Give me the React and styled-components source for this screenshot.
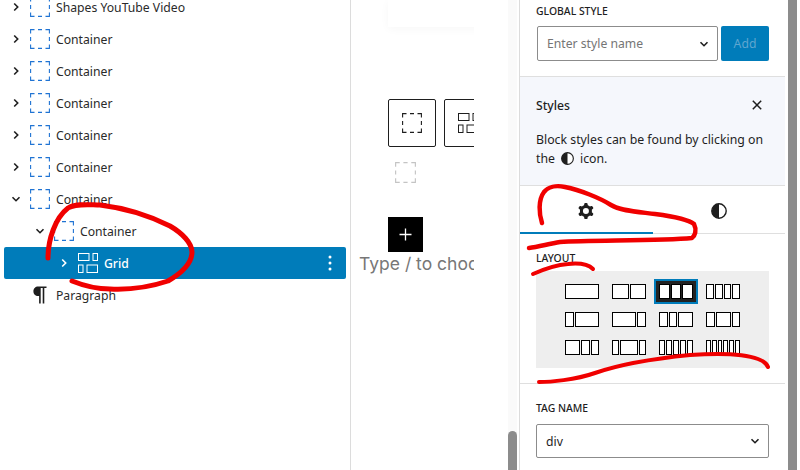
import React from 'react'
import styled, { createGlobalStyle } from 'styled-components'

const Global = createGlobalStyle`
  html, body { margin: 0; padding: 0; background: #fff; }
  body { font-family: "Noto Sans", "Open Sans", Arial, sans-serif; color: #1e1e1e; }
  * { box-sizing: border-box; }
`

const Page = styled.div`
  position: relative;
  display: flex;
  width: 800px;
  height: 470px;
  overflow: hidden;
  background: #fff;
`

/* left list view */
const ListPanel = styled.div`
  width: 351px;
  flex: none;
  border-right: 1px solid #dcdcdc;
  overflow: hidden;
`
const TreeList = styled.div`
  margin-top: -9px;
  display: flex;
  flex-direction: column;
`
const TreeRow = styled.div`
  display: flex;
  align-items: center;
  height: 32px;
  margin: 0 4px;
  padding-left: ${p => p.$depth * 24}px;
  border-radius: 2px;
  font-size: 12.2px;
  background: ${p => (p.$selected ? '#007cba' : 'transparent')};
  color: ${p => (p.$selected ? '#fff' : '#2a2a2a')};
  font-weight: ${p => (p.$selected ? 500 : 400)};
`
const ChevBox = styled.span`
  width: 24px;
  height: 24px;
  flex: none;
  display: flex;
  align-items: center;
  justify-content: center;
`
const IconBox = styled.span`
  width: 24px;
  height: 24px;
  flex: none;
  margin-right: 4px;
  display: flex;
  align-items: center;
  justify-content: center;
`
const RowLabel = styled.span`
  flex: 1;
`
const Kebab = styled.svg`
  width: 4px;
  height: 16px;
  margin-right: 14px;
`

/* canvas column */
const Canvas = styled.div`
  width: 169px;
  flex: none;
  display: flex;
  border-right: 1px solid #dcdcdc;
`
const CanvasClip = styled.div`
  width: 123px;
  flex: none;
  overflow: hidden;
  display: flex;
  flex-direction: column;
  align-items: flex-start;
`
const GhostCard = styled.div`
  width: 110px;
  height: 27px;
  flex: none;
  margin-left: 37px;
  background: #fff;
  box-shadow: 0 2px 10px rgba(0, 0, 0, 0.035);
`
const BlockChoices = styled.div`
  display: flex;
  gap: 8px;
  margin: 72px 0 0 37px;
`
const ChoiceButton = styled.div`
  width: 48px;
  height: 48px;
  flex: none;
  border: 1px solid #1e1e1e;
  border-radius: 2px;
  display: flex;
  align-items: center;
  justify-content: center;
`
const FaintIcon = styled.div`
  margin: 15px 0 0 44px;
  height: 21px;
  display: flex;
`
const PlusButton = styled.div`
  width: 35px;
  height: 35px;
  flex: none;
  margin: 34px 0 0 37px;
  background: #000;
  display: flex;
  align-items: center;
  justify-content: center;
`
const TypeHint = styled.div`
  margin: 0 0 0 8px;
  font-family: "Inter", "Lato", sans-serif;
  font-size: 17.5px;
  line-height: 24px;
  color: #777;
  white-space: nowrap;
`
const CanvasGutter = styled.div`
  flex: 1;
`
const CanvasTrack = styled.div`
  width: 9px;
  flex: none;
  margin-right: 2px;
  background: #fafafa;
  display: flex;
  flex-direction: column;
  justify-content: flex-end;
`
const Thumb = styled.div`
  height: 39px;
  background: #8c8c8c;
  border-radius: 5px 5px 0 0;
`

/* right sidebar */
const Sidebar = styled.div`
  width: 265px;
  flex: none;
  display: flex;
  flex-direction: column;
  font-size: 12.2px;
`
const Section = styled.div`
  padding: ${p => p.$pad};
  border-bottom: ${p => (p.$last ? 'none' : '1px solid #dfdfdf')};
  flex: none;
  height: ${p => p.$h}px;
`
const FieldLabel = styled.div`
  font-size: 10.4px;
  line-height: 14px;
  font-weight: 500;
  text-transform: uppercase;
  color: #1e1e1e;
`
const StyleRow = styled.div`
  display: flex;
  gap: 3px;
  margin: 8px 0 0 1px;
`
const TagRow = styled.div`
  display: flex;
  margin-top: 9px;
`
const SelectBox = styled.div`
  flex: 1;
  height: ${p => p.$h}px;
  border: 1px solid #8c8c8c;
  border-radius: 2px;
  padding: 0 8px 0 9px;
  display: flex;
  align-items: center;
  justify-content: space-between;
  color: ${p => (p.$placeholder ? '#757575' : '#1e1e1e')};
  font-size: 12.2px;
`
const AddButton = styled.div`
  width: 48px;
  height: 35px;
  flex: none;
  background: #007cba;
  border-radius: 2px;
  color: #5fa6d0;
  display: flex;
  align-items: center;
  justify-content: center;
  font-size: 12.2px;
`
const Notice = styled.div`
  height: 109px;
  flex: none;
  background: #f5f7fc;
  border-bottom: 1px solid #dfdfdf;
  padding: 19px 16px 0;
`
const NoticeHead = styled.div`
  display: flex;
  justify-content: space-between;
  align-items: center;
  height: 18px;
  padding-right: 7px;
  font-weight: 500;
  font-size: 12.2px;
`
const NoticeText = styled.div`
  margin-top: 16px;
  font-size: 12.3px;
`
const NoticeLine = styled.div`
  display: flex;
  align-items: center;
  height: 19px;
  gap: 6px;
`
const Tabs = styled.div`
  display: flex;
  height: 48px;
  flex: none;
  border-bottom: 1px solid #dfdfdf;
`
const Tab = styled.div`
  width: ${p => p.$w}px;
  display: flex;
  align-items: center;
  justify-content: center;
  height: 48px;
  flex: none;
  border-bottom: ${p => (p.$active ? '2px solid #007cba' : 'none')};
  padding: ${p => (p.$active ? '3px 1px 0 0' : '2px 0 0')};
`
const LayoutGrid = styled.div`
  margin-top: 6px;
  width: 233px;
  height: 97px;
  background: #eee;
  padding: 13px 0 0 29px;
  display: grid;
  grid-template-columns: repeat(4, 34px);
  grid-auto-rows: 15px;
  column-gap: 13px;
  row-gap: 13px;
`
const LayoutOption = styled.div`
  position: relative;
  display: flex;
  gap: 1px;
  height: 15px;
  ${p => p.$active && `
    &::before {
      content: '';
      position: absolute;
      inset: -5px -5px;
      background: #222;
      border: 2px solid #007cba;
    }
  `}
`
const LayoutCell = styled.div`
  position: relative;
  flex: ${p => p.$grow} 1 0;
  min-width: 0;
  background: #fff;
  border: 1px solid #000;
`

/* marker scribbles sit on top of the whole shot */
const Scribbles = styled.svg`
  position: absolute;
  left: 0;
  top: 0;
  width: 800px;
  height: 470px;
  pointer-events: none;
`
const PageScroll = styled.div`
  width: 9px;
  flex: none;
  margin-left: 3px;
  background: #8c8c8c;
`

const Chevron = ({ open, color = '#1e1e1e' }) => (
  <svg width="10" height="10" viewBox="0 0 10 10" fill="none" stroke={color} strokeWidth="1.6">
    <path d={open ? 'M1.5 3.2 5 6.7l3.5-3.5' : 'M3.2 1.5 6.7 5 3.2 8.5'} />
  </svg>
)

const DashedSquare = ({ color = '#1f73d3', size = 20 }) => (
  <svg width={size} height={size} viewBox="0 0 20 20" fill="none" stroke={color} strokeWidth="1.1">
    <path d="M.6 4.5V.6h3.9M8 .6h4M15.5.6h3.9v3.9M19.4 8v4M19.4 15.5v3.9h-3.9M12 19.4H8M4.5 19.4H.6v-3.9M.6 12V8" />
  </svg>
)

const GridGlyph = ({ color = '#fff' }) => (
  <svg width="20" height="20" viewBox="0 0 20 20" fill="none" stroke={color} strokeWidth="1">
    <rect x=".5" y=".5" width="10.5" height="7" />
    <rect x="15" y=".5" width="4.5" height="7" />
    <rect x=".5" y="12" width="4.5" height="7.5" />
    <rect x="9" y="12" width="10.5" height="7.5" />
  </svg>
)

const Pilcrow = () => (
  <svg width="14" height="18" viewBox="0 0 14 18" fill="#1e1e1e">
    <path d="M13.5.5H5.2C2.3.5.4 2.6.4 5.3s1.9 4.8 4.8 4.8h.9v7.4h1.6V2h2v15.5h1.6V2h2.2z" />
  </svg>
)

const HalfCircle = ({ size }) => (
  <svg width={size} height={size} viewBox="0 0 16 16">
    <circle cx="8" cy="8" r="7.2" fill="#fff" stroke="#1e1e1e" strokeWidth="1.4" />
    <path d="M8 .8a7.2 7.2 0 0 0 0 14.4z" fill="#1e1e1e" />
  </svg>
)

const treeRows = [
  { label: 'Shapes YouTube Video', depth: 0 },
  { label: 'Container', depth: 0 },
  { label: 'Container', depth: 0 },
  { label: 'Container', depth: 0 },
  { label: 'Container', depth: 0 },
  { label: 'Container', depth: 0 },
  { label: 'Container', depth: 0, open: true },
  { label: 'Container', depth: 1, open: true },
]

const layouts = [
  [1], [1, 1], [1, 1, 1], [1, 1, 1, 1],
  [1, 3], [3, 1], [1, 1, 2], [1, 2, 1],
  [2, 1, 1], [1, 3, 1], [1, 1, 1, 1, 1], [1, 1, 1, 1, 1, 1],
]

export default function App() {
  return (
    <Page>
      <Global />
      <ListPanel>
        <TreeList>
          {treeRows.map((row, i) => (
            <TreeRow key={i} $depth={row.depth}>
              <ChevBox><Chevron open={row.open} /></ChevBox>
              <IconBox><DashedSquare /></IconBox>
              <RowLabel>{row.label}</RowLabel>
            </TreeRow>
          ))}
          <TreeRow $depth={2} $selected>
            <ChevBox><Chevron color="#fff" /></ChevBox>
            <IconBox><GridGlyph /></IconBox>
            <RowLabel>Grid</RowLabel>
            <Kebab viewBox="0 0 4 16" fill="#fff">
              <circle cx="2" cy="2" r="1.5" />
              <circle cx="2" cy="8" r="1.5" />
              <circle cx="2" cy="14" r="1.5" />
            </Kebab>
          </TreeRow>
          <TreeRow $depth={0}>
            <ChevBox />
            <IconBox><Pilcrow /></IconBox>
            <RowLabel>Paragraph</RowLabel>
          </TreeRow>
        </TreeList>
      </ListPanel>

      <Canvas>
        <CanvasClip>
          <GhostCard />
          <BlockChoices>
            <ChoiceButton><DashedSquare color="#1e1e1e" /></ChoiceButton>
            <ChoiceButton><GridGlyph color="#1e1e1e" /></ChoiceButton>
          </BlockChoices>
          <FaintIcon><DashedSquare color="#c4c4c4" size={21} /></FaintIcon>
          <PlusButton>
            <svg width="13" height="13" viewBox="0 0 13 13" stroke="#fff" strokeWidth="1.3">
              <path d="M6.5.5v12M.5 6.5h12" />
            </svg>
          </PlusButton>
          <TypeHint>Type / to choo</TypeHint>
        </CanvasClip>
        <CanvasGutter />
        <CanvasTrack><Thumb /></CanvasTrack>
      </Canvas>

      <Sidebar>
        <Section $h={77} $pad="4px 16px 0">
          <FieldLabel>Global Style</FieldLabel>
          <StyleRow>
            <SelectBox $h={35} $placeholder>
              Enter style name
              <Chevron open color="#1e1e1e" />
            </SelectBox>
            <AddButton>Add</AddButton>
          </StyleRow>
        </Section>
        <Notice>
          <NoticeHead>
            Styles
            <svg width="10" height="10" viewBox="0 0 10 10" stroke="#1e1e1e" strokeWidth="1.5">
              <path d="M.8.8l8.4 8.4M9.2.8.8 9.2" />
            </svg>
          </NoticeHead>
          <NoticeText>
            <NoticeLine>Block styles can be found by clicking on</NoticeLine>
            <NoticeLine>
              <span>the</span>
              <HalfCircle size={13} />
              <span>icon.</span>
            </NoticeLine>
          </NoticeText>
        </Notice>
        <Tabs>
          <Tab $w={133} $active>
            <svg width="24" height="24" viewBox="0 0 24 24" fill="#1e1e1e">
              <path fillRule="evenodd" clipRule="evenodd" d="M10.289 4.836A1 1 0 0111.275 4h1.306a1 1 0 01.987.836l.244 1.466c.787.26 1.503.679 2.108 1.218l1.393-.522a1 1 0 011.216.437l.653 1.13a1 1 0 01-.23 1.273l-1.148.944a6.025 6.025 0 010 2.435l1.149.946a1 1 0 01.23 1.272l-.653 1.13a1 1 0 01-1.216.437l-1.394-.522c-.605.54-1.32.958-2.108 1.218l-.244 1.466a1 1 0 01-.987.836h-1.306a1 1 0 01-.986-.836l-.244-1.466a5.995 5.995 0 01-2.108-1.218l-1.394.522a1 1 0 01-1.217-.436l-.653-1.131a1 1 0 01.23-1.272l1.149-.946a6.026 6.026 0 010-2.435l-1.148-.944a1 1 0 01-.23-1.272l.653-1.131a1 1 0 011.217-.437l1.393.522a5.994 5.994 0 012.108-1.218l.244-1.466zM14.929 12a3 3 0 11-6 0 3 3 0 016 0z" />
            </svg>
          </Tab>
          <Tab $w={132}><HalfCircle size={16} /></Tab>
        </Tabs>
        <Section $h={150} $pad="17px 0 0 16px">
          <FieldLabel>Layout</FieldLabel>
          <LayoutGrid>
            {layouts.map((cells, i) => (
              <LayoutOption key={i} $active={i === 2}>
                {cells.map((grow, j) => <LayoutCell key={j} $grow={grow} />)}
              </LayoutOption>
            ))}
          </LayoutGrid>
        </Section>
        <Section $h={80} $pad="17px 16px 0" $last>
          <FieldLabel>Tag Name</FieldLabel>
          <TagRow>
            <SelectBox $h={34}>
              div
              <Chevron open color="#1e1e1e" />
            </SelectBox>
          </TagRow>
        </Section>
      </Sidebar>

      <PageScroll />

      <Scribbles viewBox="0 0 800 470" fill="none" stroke="#f00000" strokeLinecap="round" strokeLinejoin="round">
        <path strokeWidth="5" d="M48 258C48 240 55 218 68 208C76 203 90 205 100 205C125 208 150 216 170 226C182 233 192 243 192 252C192 264 180 274 168 281C150 287 130 290 110 289C95 289 82 285 72 281" />
        <path strokeWidth="4.5" d="M542 223C539 214 538 200 544 192C548 187 556 185 565 187C580 190 600 198 611 205C620 211 640 212 655 214C670 216 688 219 694 224C697 230 695 236 692 238C660 241 590 240 560 242C548 244 538 247 529 248" />
        <path strokeWidth="4" d="M533 274C542 270 555 265 568 264C578 263 588 264 593 269" />
        <path strokeWidth="4" d="M539 382C550 382 575 380 595 373C615 366 650 359 690 355C720 353 745 354 758 359C763 361 767 364 768 367" />
      </Scribbles>
    </Page>
  )
}
